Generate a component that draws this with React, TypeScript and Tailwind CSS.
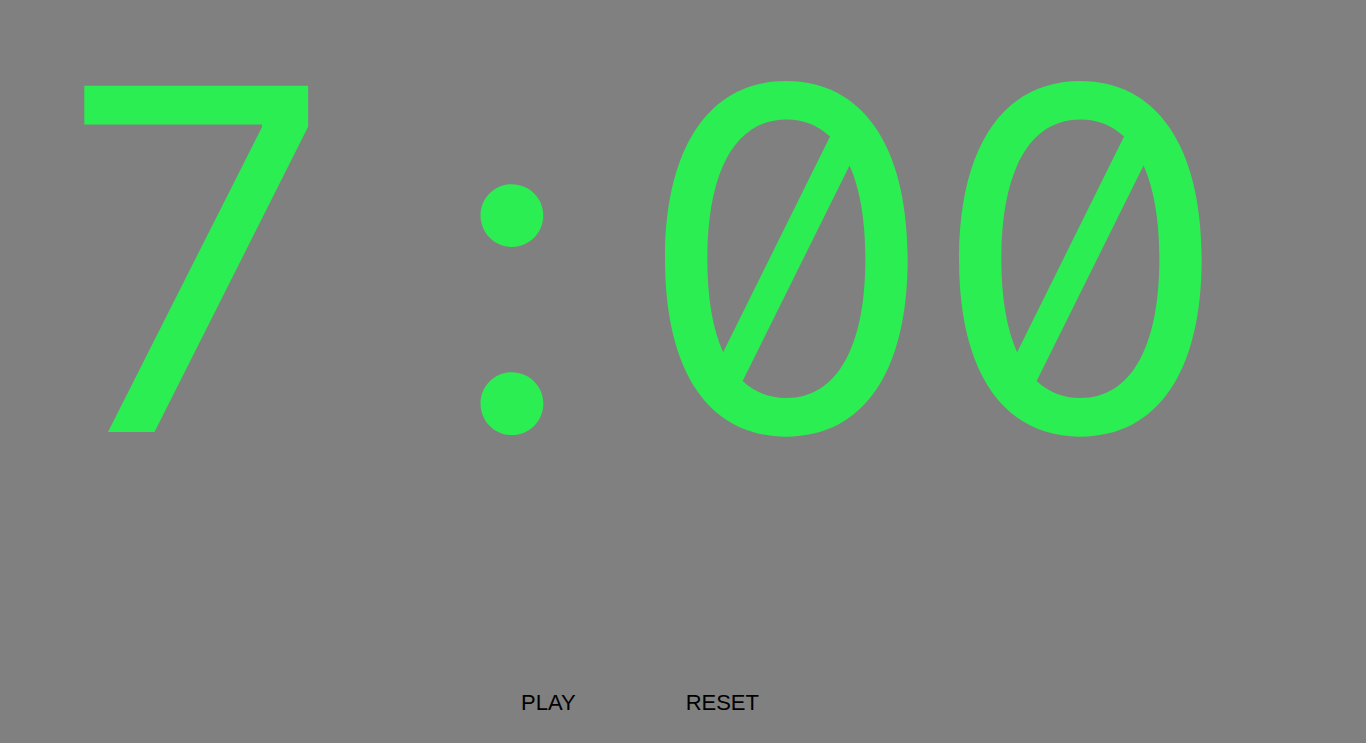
import React from "react";

export default function App() {
    return (
        <div className="w-full h-[743px] bg-[#808080] overflow-hidden relative">
            <div className="flex pt-[21px] pl-[42px] text-[#2bee52] leading-none text-[476px] font-['Inter',sans-serif] slashed-zero tabular-nums">
                <span className="w-[294px] text-center">7</span>
                <span className="w-[294px] text-center ml-[28px]">:</span>
                <span className="w-[294px] text-center -ml-[26px]">0</span>
                <span className="w-[294px] text-center">0</span>
            </div>
            <div className="absolute top-[686px] left-0 flex text-[22px] text-black font-['Liberation_Sans',Arial,sans-serif]">
                <button className="ml-[521px]">PLAY</button>
                <button className="ml-[110px]">RESET</button>
            </div>
        </div>
    );
}
